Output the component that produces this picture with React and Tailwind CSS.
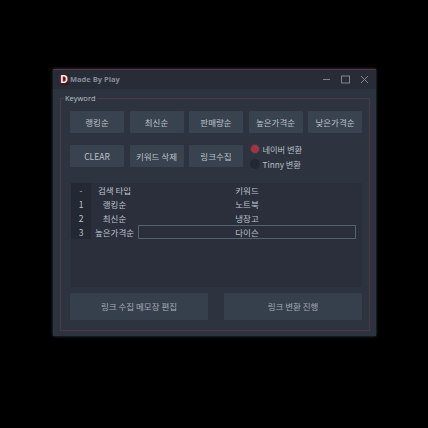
const font = { fontFamily: '"Noto Sans CJK KR", "Noto Sans", sans-serif' };

function Btn({ children, className = "" }) {
  return (
    <div className={"flex items-center justify-center bg-[#39424f] text-[#bcc1c9] text-[8.5px] rounded-[1px] " + className}>
      {children}
    </div>
  );
}

const top = ["랭킹순", "최신순", "판매량순", "높은가격순", "낮은가격순"];
const rows = [
  ["-", "검색 타입", "키워드"],
  ["1", "랭킹순", "노트북"],
  ["2", "최신순", "냉장고"],
  ["3", "높은가격순", "다이슨"],
];

export default function App() {
  return (
    <div className="w-[428px] h-[428px] bg-black pl-[53px] pt-[69px] overflow-hidden" style={font}>
      <div className="w-[323px] h-[267px] bg-[#2d333f] border-t border-[#5e3440] flex flex-col shadow-[0_0_3px_#3a3f48]">
        <div className="h-[19px] bg-[#272c37] flex items-center pl-[7px] pr-[7px] shrink-0">
          <div className="w-[8px] h-[11px] bg-[#3a0f15] rounded-[2px] flex items-center justify-center text-[#ffffff] text-[10px] font-bold leading-none [text-shadow:0_0_2px_#e0303f]" style={{ fontFamily: '"Liberation Sans", sans-serif' }}>D</div>
          <span className="ml-[2px] text-[7.5px] font-bold text-[#858c99]" style={{ fontFamily: '"Open Sans", sans-serif' }}>Made By Play</span>
          <div className="ml-auto flex items-center gap-[10px] text-[#7f8591]">
            <svg width="9" height="9" viewBox="0 0 9 9"><path d="M1 4.5H8" stroke="currentColor" strokeWidth="1" /></svg>
            <svg width="9" height="9" viewBox="0 0 9 9"><rect x="0.5" y="1" width="8" height="7" fill="none" stroke="currentColor" strokeWidth="1" /></svg>
            <svg width="9" height="9" viewBox="0 0 9 9"><path d="M1 1L8 8M8 1L1 8" stroke="currentColor" strokeWidth="1" /></svg>
          </div>
        </div>
        <div className="flex-1 px-[7px] pt-[9px] pb-[5px] flex">
          <div className="relative flex-1 border border-[#513645] pt-[12px] pl-[9px] pr-[7px] flex flex-col">
            <span className="absolute left-[3px] top-[-6px] bg-[#2d333f] px-[1px] text-[7.5px] font-medium leading-[11px] text-[#bcc1c9]" style={{ fontFamily: '"Open Sans", sans-serif' }}>Keyword</span>
            <div className="flex gap-[5.5px]">
              {top.map((t) => (
                <Btn key={t} className="w-[54px] h-[22px]">{t}</Btn>
              ))}
            </div>
            <div className="flex gap-[5.5px] mt-[12px] h-[22px]">
              <Btn className="w-[54px] h-[22px]">CLEAR</Btn>
              <Btn className="w-[54px] h-[22px]">키워드 삭제</Btn>
              <Btn className="w-[54px] h-[22px]">링크수집</Btn>
              <div className="ml-[1px] flex flex-col gap-[3px] -mt-[2px] text-[8.2px] text-[#bcc1c9]">
                <div className="flex items-center gap-[3px] h-[12px]">
                  <span className="w-[10px] h-[10px] rounded-full bg-[#a5323f] border border-[#3f3c4a]" />
                  네이버 변환
                </div>
                <div className="flex items-center gap-[3px] h-[12px]">
                  <span className="w-[10px] h-[10px] rounded-full bg-[#222834]" />
                  Tinny 변환
                </div>
              </div>
            </div>
            <div className="mt-[16px] ml-[1px] w-[291px] h-[104px] bg-[#2a2f3b] text-[8.5px] text-[#bcc1c9]">
              {rows.map((r, i) => (
                <div key={i} className="flex h-[14px] items-center text-center">
                  <div className="w-[20px] h-full bg-[#232833] flex items-center justify-center">{r[0]}</div>
                  <div className="w-[47px]">{r[1]}</div>
                  <div className={"flex-1 h-full flex items-center justify-center " + (i === 3 ? "border border-[#55636a] mr-[6px]" : "pr-[6px]")}>{r[2]}</div>
                </div>
              ))}
            </div>
            <div className="mt-[6px] flex gap-[16px]">
              <Btn className="w-[138px] h-[27px] !bg-[#36404d] !text-[#a3a9b3]">링크 수집 메모장 편집</Btn>
              <Btn className="w-[138px] h-[27px] !bg-[#36404d] !text-[#a3a9b3]">링크 변환 진행</Btn>
            </div>
          </div>
        </div>
      </div>
    </div>
  );
}
